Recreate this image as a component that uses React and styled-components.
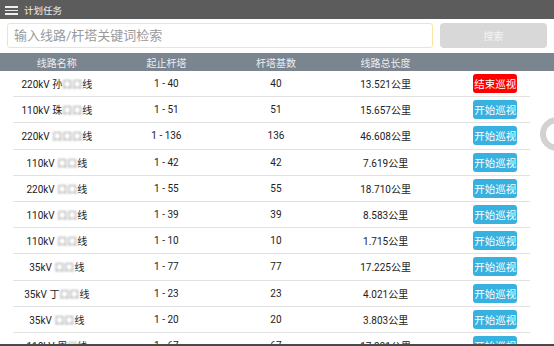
import React from 'react';
import styled, { createGlobalStyle } from 'styled-components';

const GlobalStyle = createGlobalStyle`
  html, body {
    margin: 0;
    padding: 0;
    background: #fff;
  }
  body {
    font-family: Roboto, "Noto Sans CJK SC", sans-serif;
  }
`

const Page = styled.div`
  position: relative;
  width: 554px;
  height: 346px;
  display: flex;
  flex-direction: column;
  overflow: hidden;
  background: #fff;
`

const TopBar = styled.div`
  height: 19px;
  flex: none;
  display: flex;
  align-items: center;
  gap: 6px;
  padding-left: 5px;
  background: #5b5c5b;
  color: #f0f0f0;
  font-size: 9.5px;
`

const Menu = styled.div`
  width: 13px;
  height: 9px;
  margin-top: 2px;
  display: flex;
  flex-direction: column;
  justify-content: space-between;

  span {
    display: block;
    height: 1.6px;
    background: #eee;
  }
`

const SearchRow = styled.div`
  flex: none;
  display: flex;
  gap: 7px;
  padding: 4px 7px 4px 7px;
`

const Input = styled.input`
  flex: 1;
  height: 25px;
  box-sizing: border-box;
  border: 1px solid #fde3a6;
  border-radius: 3px;
  padding: 0 6px;
  font-family: inherit;
  font-size: 13px;
  color: #333;
  outline: none;

  &::placeholder {
    color: #9a9a9a;
  }
`

const SearchButton = styled.button`
  width: 107px;
  height: 25px;
  border: none;
  border-radius: 4px;
  background: #d8d8d8;
  color: #f4f4f4;
  font-family: inherit;
  font-size: 10px;
`

const Grid = styled.div`
  display: grid;
  grid-template-columns: repeat(5, 1fr);
  align-items: center;
  justify-items: center;
  padding: 0 4px 0 2px;
`

const HeadRow = styled(Grid)`
  flex: none;
  height: 18px;
  margin-top: 1px;
  background: #7a8590;
  color: #eceef0;
  font-size: 10px;
`

const Body = styled.div`
  flex: 1;
  overflow: hidden;
`

const Row = styled(Grid)`
  height: 25.2px;
  color: #222;
  font-size: 10px;
`

const Divider = styled.div`
  height: 1px;
  margin: 0 24px 0 13px;
  background: #e2e2e2;
`

const Masked = styled.span`
  color: #8a8a8a;
  filter: blur(1.1px);
`

const PatrolButton = styled.button`
  width: 44px;
  height: 19px;
  padding: 0;
  border: none;
  border-radius: 3px;
  background: ${p => (p.$active ? '#ff0000' : '#37b2e0')};
  color: #fff;
  font-family: inherit;
  font-size: 10.5px;
`

const BottomBar = styled.div`
  flex: none;
  height: 2px;
  background: #4a4a4a;
`

const FloatRing = styled.div`
  position: absolute;
  right: -20px;
  top: 117px;
  width: 22px;
  height: 22px;
  border: 6px solid #d2d2d2;
  border-radius: 50%;
`

const rows = [
  ['220kV', '孙', '口口', '线', '1 - 40', '40', '13.521公里', true],
  ['110kV', '珠', '口口', '线', '1 - 51', '51', '15.657公里'],
  ['220kV', '', '口口口', '线', '1 - 136', '136', '46.608公里'],
  ['110kV', '', '口口', '线', '1 - 42', '42', '7.619公里'],
  ['220kV', '', '口口', '线', '1 - 55', '55', '18.710公里'],
  ['110kV', '', '口口', '线', '1 - 39', '39', '8.583公里'],
  ['110kV', '', '口口', '线', '1 - 10', '10', '1.715公里'],
  ['35kV', '', '口口', '线', '1 - 77', '77', '17.225公里'],
  ['35kV', '丁', '口口', '线', '1 - 23', '23', '4.021公里'],
  ['35kV', '', '口口', '线', '1 - 20', '20', '3.803公里'],
  ['110kV', '周', '口', '线', '1 - 67', '67', '17.991公里'],
]

const App = () => {
  return (
    <Page>
      <GlobalStyle />
      <TopBar>
        <Menu><span /><span /><span /></Menu>
        计划任务
      </TopBar>
      <SearchRow>
        <Input placeholder="输入线路/杆塔关键词检索" />
        <SearchButton>搜索</SearchButton>
      </SearchRow>
      <HeadRow>
        <div>线路名称</div>
        <div>起止杆塔</div>
        <div>杆塔基数</div>
        <div>线路总长度</div>
        <div />
      </HeadRow>
      <Body>
        {rows.map((r, i) => (
          <React.Fragment key={i}>
            <Row>
              <div>
                {r[0]} {r[1]}<Masked>{r[2]}</Masked>{r[3]}
              </div>
              <div>{r[4]}</div>
              <div>{r[5]}</div>
              <div>{r[6]}</div>
              <PatrolButton $active={r[7]}>{r[7] ? '结束巡视' : '开始巡视'}</PatrolButton>
            </Row>
            <Divider />
          </React.Fragment>
        ))}
      </Body>
      <BottomBar />
      <FloatRing />
    </Page>
  )
}

export default App;
